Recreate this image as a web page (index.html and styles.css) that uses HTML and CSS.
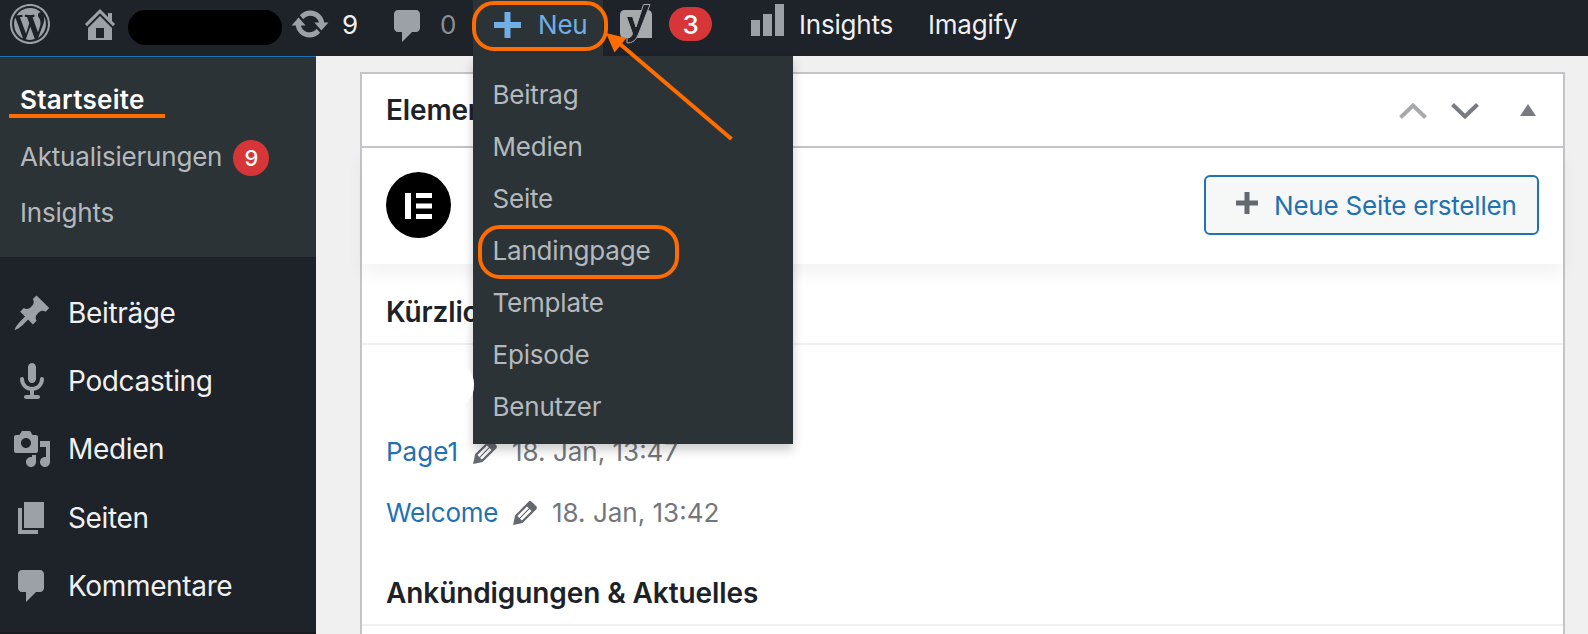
FILE: index.html
```
<!DOCTYPE html>
<html lang="de">
  <head>
    <meta charset="utf-8" />
    <title>Dashboard</title>
    <link rel="stylesheet" href="styles.css">
  </head>
  <body>
    <header class="adminbar">
      <a class="bar-item bar-logo">
        <svg class="icon" viewBox="0 0 20 20"><path fill-rule="evenodd" d="M20 10c0-5.52-4.48-10-10-10S0 4.48 0 10s4.48 10 10 10 10-4.48 10-10zM10 1.01c4.97 0 8.99 4.02 8.99 8.99s-4.02 8.99-8.99 8.99S1.01 14.97 1.01 10 5.03 1.01 10 1.01zM8.01 14.82L4.96 6.61c.49-.03 1.05-.08 1.05-.08.43-.05.38-1.01-.06-.99 0 0-1.29.1-2.13.1-.15 0-.33 0-.52-.01 1.44-2.17 3.9-3.6 6.7-3.6 2.09 0 3.99.79 5.41 2.09-.6-.08-1.45.35-1.45 1.42 0 .66.38 1.22.79 1.88.31.54.5 1.22.5 2.21 0 1.34-1.27 4.48-1.27 4.48l-2.71-7.5c.48-.03.75-.16.75-.16.43-.05.38-1.1-.05-1.08 0 0-1.3.11-2.14.11-.78 0-2.11-.11-2.11-.11-.43-.02-.48 1.06-.05 1.08l.84.08 1.12 3.04zm6.02 2.15L16.64 10s.67-1.69.39-3.81c.63 1.14.94 2.42.94 3.81 0 2.96-1.56 5.58-3.94 6.97zM2.68 6.77L6.5 17.25c-2.67-1.3-4.47-4.08-4.47-7.25 0-1.16.2-2.23.65-3.23zm7.45 4.53l2.29 6.25c-.75.27-1.57.42-2.42.42-.72 0-1.41-.11-2.06-.3z"/></svg>
      </a>
      <a class="bar-item bar-home">
        <svg class="icon" viewBox="0 0 20 20"><path fill-rule="evenodd" d="M16 8.5l1.53 1.53-1.06 1.06L10 4.6l-6.47 6.49-1.06-1.06L10 2.5l4 4v-2h2v4zm-6-2.46l6 5.99V18H4v-5.97zM12 17v-5H8v5h4z"/></svg>
        <span class="site-name"></span>
      </a>
      <a class="bar-item bar-updates">
        <svg class="icon" viewBox="0 0 20 20"><path d="M10.2 3.28c3.53 0 6.43 2.61 6.92 6h2.08l-3.5 4-3.5-4h2.32c-.45-1.97-2.21-3.45-4.32-3.45-1.45 0-2.73.71-3.54 1.78L4.95 5.66C6.23 4.2 8.11 3.28 10.2 3.28zm-.4 13.44c-3.52 0-6.43-2.61-6.92-6H.8l3.5-4c1.17 1.33 2.33 2.67 3.5 4H5.48c.45 1.97 2.21 3.45 4.32 3.45 1.45 0 2.73-.71 3.54-1.78l1.71 1.95c-1.28 1.46-3.15 2.38-5.25 2.38z"/></svg>
        <span>9</span>
      </a>
      <a class="bar-item bar-comments">
        <svg class="icon" viewBox="0 0 20 20"><path d="M5 2h9c1.1 0 2 .9 2 2v7c0 1.1-.9 2-2 2h-2l-5 5v-5H5c-1.1 0-2-.9-2-2V4c0-1.1.9-2 2-2z"/></svg>
        <span>0</span>
      </a>
      <div class="bar-item bar-new">
        <svg class="icon-plus" viewBox="0 0 27 26"><path d="M10.500 0h6v10h10.500v6H16.500v10h-6V16H0v-6h10.500z"/></svg>
        <span>Neu</span>
        <ul class="dropdown">
          <li>Beitrag</li>
          <li>Medien</li>
          <li>Seite</li>
          <li><span class="marked">Landingpage</span></li>
          <li>Template</li>
          <li>Episode</li>
          <li>Benutzer</li>
        </ul>
        <span class="mark-new"></span>
      </div>
      <a class="bar-item bar-seo">
        <svg class="icon-yoast" viewBox="0 0 36 44">
          <path class="box" d="M7 10h22q5 0 5 5v23H7q-5 0-5-5V15q0-5 5-5z"/>
          <path class="outline" d="M25.500 4.500h6.500L20.500 34q-3.500 9.500-11.500 9v-5q4.500 0 5.500-4.500L8.500 16.500H14.500L18 27z"/>
        </svg>
        <span class="badge badge-wide">3</span>
      </a>
      <a class="bar-item bar-insights">
        <svg class="icon-bars" viewBox="0 0 33 32"><path d="M0 16h9v16H0zM12 10h9v22h-9zM24 0h9v32h-9z"/></svg>
        <span>Insights</span>
      </a>
      <a class="bar-item">Imagify</a>
    </header>

    <div class="wrap">
      <nav class="sidebar">
        <ul class="submenu">
          <li class="current"><span>Startseite</span></li>
          <li>Aktualisierungen <span class="badge">9</span></li>
          <li>Insights</li>
        </ul>
        <ul class="menu">
          <li>
            <svg class="icon" viewBox="0 0 20 20"><path d="M10.44 3.02l1.82-1.82 6.36 6.35-1.83 1.82c-1.05-.68-2.48-.57-3.41.36l-.75.75c-.92.93-1.04 2.35-.35 3.41l-1.83 1.82-2.41-2.41-2.8 2.79c-.42.42-3.38 2.71-3.8 2.29s1.86-3.39 2.28-3.81l2.79-2.79L4.1 9.36l1.83-1.82c1.05.69 2.48.57 3.4-.36l.75-.75c.93-.92 1.05-2.35.36-3.41z"/></svg>
            <span>Beiträge</span>
          </li>
          <li>
            <svg class="icon" viewBox="0 0 20 20"><path d="M12 9V3c0-1.100-.89-2-2-2-1.120 0-2 .94-2 2v6c0 1.100.9 2 2 2 1.130 0 2-.94 2-2zm4 0c0 2.970-2.160 5.430-5 5.910V17h2c.56 0 1 .45 1 1s-.44 1-1 1H7c-.55 0-1-.45-1-1s.45-1 1-1h2v-2.090C6.170 14.430 4 11.970 4 9c0-.55.45-1 1-1 .56 0 1 .45 1 1 0 2.210 1.800 4 4 4 2.210 0 4-1.790 4-4 0-.55.45-1 1-1 .56 0 1 .45 1 1z"/></svg>
            <span>Podcasting</span>
          </li>
          <li>
            <svg class="icon" viewBox="0 0 20 20"><path fill-rule="evenodd" d="M13 11V4c0-.55-.45-1-1-1h-1.670L9 1H5L3.670 3H2c-.55 0-1 .45-1 1v7c0 .55.45 1 1 1h10c.55 0 1-.45 1-1zM7 4.500c1.380 0 2.500 1.120 2.500 2.500S8.380 9.500 7 9.500 4.500 8.380 4.500 7 5.620 4.500 7 4.500zM14 6h5v10.500c0 1.380-1.120 2.500-2.500 2.500S14 17.880 14 16.500s1.120-2.500 2.500-2.500c.17 0 .34.02.5.05V9h-3V6zm-4 8.050V13h2v3.500c0 1.380-1.120 2.500-2.500 2.500S7 17.880 7 16.500 8.120 14 9.500 14c.17 0 .34.02.5.05z"/></svg>
            <span>Medien</span>
          </li>
          <li>
            <svg class="icon" viewBox="0 0 20 20"><path d="M6 15V2h10v13H6zm-1 1h8v2H3V5h2v11z"/></svg>
            <span>Seiten</span>
          </li>
          <li>
            <svg class="icon" viewBox="0 0 20 20"><path d="M5 2h9c1.100 0 2 .9 2 2v7c0 1.100-.9 2-2 2h-2l-5 5v-5H5c-1.100 0-2-.9-2-2V4c0-1.100.9-2 2-2z"/></svg>
            <span>Kommentare</span>
          </li>
        </ul>
      </nav>

      <main class="content">
        <section class="postbox">
          <div class="postbox-header">
            <h2 class="covered">Elementor</h2>
            <div class="handles">
              <svg class="handle-up" viewBox="0 0 28 16"><path d="M1.500 14.500L14 2.500l12.500 12"/></svg>
              <svg class="handle-down" viewBox="0 0 28 16"><path d="M1.500 1.500L14 13.500l12.500-12"/></svg>
              <svg class="handle-toggle" viewBox="0 0 16 12"><path d="M8 0l8 12H0z"/></svg>
            </div>
          </div>
          <div class="overview">
            <svg class="elementor-logo" viewBox="0 0 65 66">
              <ellipse cx="32.500" cy="33" rx="32.500" ry="33"/>
              <path d="M19 21h6v26h-6zM30 21h16v5H30zM30 31.500h16v5H30zM30 42h16v5H30z"/>
            </svg>
            <button class="create-button">
              <svg viewBox="0 0 22 22"><path d="M8.500 0h5v8.500H22v5h-8.500V22h-5v-8.500H0v-5h8.500z"/></svg>
              <span>Neue Seite erstellen</span>
            </button>
          </div>
          <div class="heading heading-recent"><h3 class="covered">Kürzlich</h3></div>
          <ul class="recent">
            <li class="hidden-entry"><span></span></li>
            <li>
              <a>Page1</a>
              <svg class="icon-edit" viewBox="3 3 14 14"><path fill-rule="evenodd" d="M13.890 3.390l2.710 2.720c.46.46.42 1.240.03 1.640l-8.010 8.020-5.560 1.160 1.160-5.580s7.600-7.630 7.990-8.030c.39-.39 1.220-.39 1.680.07zm-2.730 2.790l-5.590 5.610 1.110 1.110 5.540-5.650zm-2.970 8.230l5.580-5.600-1.070-1.080-5.590 5.600z"/></svg>
              <span>18. Jan, 13:47</span>
            </li>
            <li>
              <a>Welcome</a>
              <svg class="icon-edit" viewBox="3 3 14 14"><path fill-rule="evenodd" d="M13.890 3.390l2.710 2.720c.46.46.42 1.240.03 1.640l-8.010 8.020-5.560 1.160 1.160-5.580s7.600-7.630 7.990-8.030c.39-.39 1.220-.39 1.680.07zm-2.730 2.790l-5.590 5.610 1.110 1.110 5.540-5.650zm-2.970 8.230l5.580-5.600-1.070-1.080-5.590 5.600z"/></svg>
              <span>18. Jan, 13:42</span>
            </li>
          </ul>
          <h3 class="heading heading-news">Ankündigungen &amp; Aktuelles</h3>
        </section>
      </main>
    </div>

    <svg class="arrow" viewBox="0 0 130 112">
      <path class="arrow-line" d="M125.500 107L14 12"/>
      <path class="arrow-head" d="M0 1l20.500 5L8.500 20.500z"/>
    </svg>
  </body>
</html>
```
FILE: styles.css
```
*,
*::after {
  box-sizing: border-box;
}
body {
  margin: 0;
  height: 634px;
  overflow: hidden;
  position: relative;
  background: #f0f0f0;
  color: #1d2229;
  font-family: Inter, "Liberation Sans", sans-serif;
  font-size: 26px;
  letter-spacing: -0.2px;
}
ul {
  list-style: none;
  margin: 0;
  padding: 0;
}
svg {
  display: block;
  flex: none;
}
.icon {
  width: 40px;
  height: 40px;
  fill: #9ca1a8;
}

/* top bar */
.adminbar {
  position: relative;
  z-index: 2;
  display: flex;
  height: 56px;
  background: #1e2229;
  color: #f0f0f1;
}
.bar-item {
  display: flex;
  height: 56px;
  line-height: 50px;
  white-space: nowrap;
}
.bar-logo {
  width: 80px;
  padding: 4px 0 0 10px;
}
.bar-home {
  width: 210px;
}
.bar-home .icon,
.bar-updates .icon {
  margin-top: 4px;
}
.site-name {
  width: 154px;
  height: 35px;
  margin: 10px 0 0 8px;
  border-radius: 18px;
  background: #000;
}
.bar-updates {
  width: 98px;
  gap: 12px;
}
.bar-comments {
  width: 85px;
  gap: 12px;
  color: #8c8f92;
}
.bar-comments .icon {
  margin-top: 6px;
}
.bar-new {
  position: relative;
  width: 130px;
  padding-left: 21px;
  gap: 17px;
  background: #2c3336;
  color: #72aee6;
}
.icon-plus {
  width: 27px;
  height: 26px;
  margin-top: 12px;
  fill: #72aee6;
}
.mark-new {
  position: absolute;
  left: -1px;
  top: 1px;
  width: 136px;
  height: 50px;
  border: 4px solid #ff6c00;
  border-radius: 22px;
}
.bar-seo {
  width: 148px;
  padding-left: 15px;
  gap: 15px;
}
.icon-yoast {
  width: 36px;
  height: 44px;
}
.icon-yoast .box {
  fill: #a7aaad;
}
.icon-yoast .outline {
  fill: #1e2229;
  stroke: #a7aaad;
  stroke-width: 1;
}
.badge {
  display: inline-block;
  width: 36px;
  height: 36px;
  border-radius: 18px;
  background: #d63638;
  color: #fff;
  font-size: 22px;
  font-weight: 500;
  line-height: 36px;
  text-align: center;
}
.badge-wide {
  width: 43px;
  height: 34px;
  margin-top: 7px;
  font-size: 26px;
  line-height: 36px;
}
.bar-insights {
  width: 177px;
  gap: 15px;
}
.icon-bars {
  width: 33px;
  height: 32px;
  margin-top: 4px;
  fill: #9ca1a8;
}

/* "new" menu */
.dropdown {
  position: absolute;
  left: 0;
  top: 56px;
  width: 320px;
  height: 388px;
  padding: 13px 0 0 19.5px;
  background: #2c3336;
  box-shadow: 0 6px 10px rgba(0, 0, 0, 0.2);
  color: #b4b9be;
}
.dropdown li {
  height: 52px;
  line-height: 52px;
}
.marked {
  position: relative;
}
.marked::after {
  content: "";
  position: absolute;
  left: -14.5px;
  top: -10px;
  width: 201px;
  height: 54px;
  border: 4px solid #ff6c00;
  border-radius: 22px;
}

.wrap {
  display: flex;
  height: 578px;
}

/* sidebar */
.sidebar {
  flex: none;
  width: 316px;
  background: #1e2229;
  border-bottom: 2px solid #191b1f;
}
.submenu {
  height: 201px;
  padding: 14px 0 0 20px;
  border-top: 1px solid #2271b1;
  background: #2c3336;
  color: #b4b9be;
}
.submenu li {
  display: flex;
  align-items: center;
  gap: 12px;
  height: 56px;
}
.submenu .current {
  height: 57px;
  align-items: flex-start;
  color: #fff;
  font-weight: 600;
  letter-spacing: 0.3px;
}
.current span {
  width: 156px;
  height: 47px;
  margin-left: -11px;
  padding-left: 11px;
  border-bottom: 4px solid #ff6c00;
  line-height: 57px;
}
.submenu .badge {
  margin: 3px 0 0 -1px;
}
.menu {
  padding-top: 22px;
  color: #f0f0f1;
  font-size: 28px;
  letter-spacing: -0.35px;
}
.menu li {
  display: flex;
  align-items: center;
  gap: 16px;
  height: 68.2px;
  padding-left: 12px;
}

/* dashboard widget */
.content {
  flex: 1;
  padding: 16px 23px 0 44px;
}
.postbox {
  height: 562px;
  border: 2px solid #c3c4c7;
  border-bottom: none;
  background: #fff;
}
.postbox-header {
  display: flex;
  justify-content: space-between;
  align-items: center;
  height: 74px;
  padding: 0 27px 0 24px;
  border-bottom: 2px solid #c3c4c7;
}
h2,
h3 {
  margin: 0;
  font-size: 28px;
  font-weight: 600;
  letter-spacing: -0.15px;
}
/* titles that run under the open menu */
.covered {
  width: 87px;
  overflow: hidden;
}
.handles {
  display: flex;
  align-items: center;
}
.handles svg {
  fill: none;
  stroke-width: 4;
}
.handle-up {
  width: 28px;
  height: 16px;
  margin-top: 2px;
  stroke: #a7aaad;
}
.handle-down {
  width: 28px;
  height: 16px;
  margin: 2px 0 0 24px;
  stroke: #787c82;
}
.handles .handle-toggle {
  width: 16px;
  height: 12px;
  margin: 0 0 1px 41px;
  fill: #787c82;
}
.overview {
  display: flex;
  justify-content: space-between;
  align-items: flex-start;
  height: 116px;
  padding: 24px 24px 0;
  box-shadow: 0 10px 16px rgba(0, 0, 0, 0.05);
}
.elementor-logo {
  width: 65px;
  height: 66px;
}
.elementor-logo path {
  fill: #fff;
}
.create-button {
  display: flex;
  align-items: center;
  width: 335px;
  height: 60px;
  margin-top: 3px;
  padding: 0 0 0 30px;
  border: 2px solid #2271b1;
  border-radius: 6px;
  background: #f6f7f7;
  color: #2271b1;
  font: inherit;
  letter-spacing: -0.2px;
  white-space: nowrap;
}
.create-button svg {
  width: 22px;
  height: 22px;
  margin: 0 16px 4px 0;
  fill: #646970;
}
.heading {
  padding-left: 24px;
  border-bottom: 2px solid #f0f0f1;
}
.heading-recent {
  height: 81px;
  line-height: 97px;
}
.heading-recent .covered {
  height: 79px;
}
.recent {
  height: 213px;
}
.recent li {
  display: flex;
  align-items: center;
  height: 61px;
  padding-left: 24px;
  color: #72777c;
  letter-spacing: 0;
}
.recent a {
  color: #2271b1;
  letter-spacing: -0.3px;
}
.recent li:nth-child(2) a {
  letter-spacing: 0;
}
.icon-edit {
  width: 24px;
  height: 24px;
  margin: 0 15px;
  fill: #646970;
}
/* blanked-out first entry, reaches one pixel over the menu */
.recent .hidden-entry {
  position: relative;
  z-index: 3;
  height: 76px;
}
.hidden-entry span {
  width: 88px;
  height: 46px;
  margin-top: 4px;
  border-radius: 22px;
  background: #fff;
}
.heading-news {
  height: 68px;
  line-height: 70px;
  letter-spacing: -0.1px;
}

.arrow {
  position: absolute;
  z-index: 3;
  left: 606px;
  top: 32px;
  width: 130px;
  height: 112px;
}
.arrow-line {
  stroke: #ff6c00;
  stroke-width: 4;
}
.arrow-head {
  fill: #ff6c00;
}
```
